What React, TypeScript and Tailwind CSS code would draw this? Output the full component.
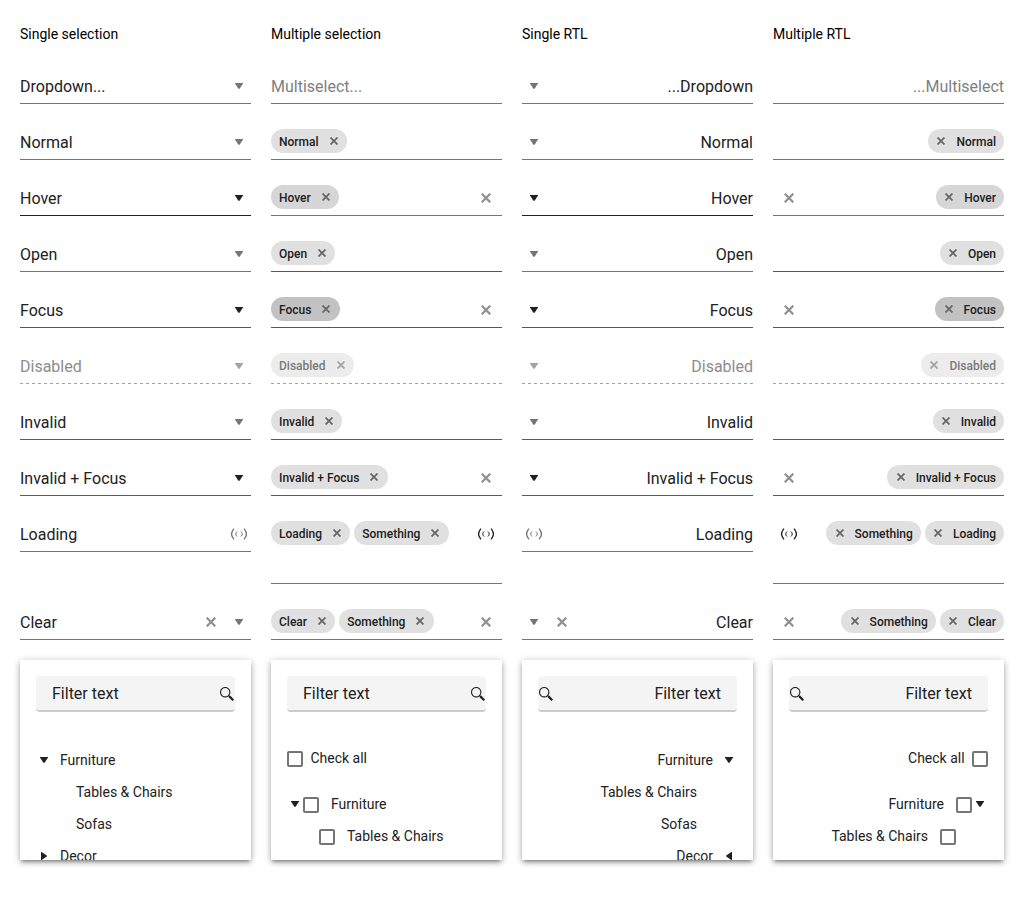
import React from "react";

type Line = "normal" | "strong" | "focus" | "invalid" | "disabled";

type FieldState = {
  label: string;
  line: Line;
  multiLine?: Line;
  activeArrow?: boolean;
  multiClear?: boolean;
  chipTone?: string;
  disabled?: boolean;
  loading?: boolean;
  clear?: boolean;
  extra?: string;
};

const lines: Record<Line, string> = {
  normal: "border-b border-[#757575]",
  strong: "border-b border-[#212121]",
  focus: "border-b border-[#3f51b5]",
  invalid: "border-b border-[#f41c0c]",
  disabled: "border-b border-transparent",
};

const states: FieldState[] = [
  { label: "Normal", line: "normal" },
  { label: "Hover", line: "strong", multiLine: "normal", activeArrow: true, multiClear: true, chipTone: "bg-[#d6d6d6]" },
  { label: "Open", line: "normal", multiLine: "focus" },
  { label: "Focus", line: "focus", activeArrow: true, multiClear: true, chipTone: "bg-[#c2c2c2]" },
  { label: "Disabled", line: "disabled", disabled: true },
  { label: "Invalid", line: "invalid" },
  { label: "Invalid + Focus", line: "invalid", activeArrow: true, multiClear: true },
  { label: "Loading", line: "normal", loading: true, extra: "Something" },
  { label: "Clear", line: "normal", clear: true, multiClear: true, extra: "Something" },
];

function Arrow({ className = "" }: { className?: string }) {
  return (
    <svg className={`h-1.5 w-2 shrink-0 ${className}`} viewBox="0 0 8 6" fill="currentColor">
      <path d="M0 0h8v.6L4.600 5.800H3.400L0 .6z" />
    </svg>
  );
}

function SideArrow() {
  return (
    <svg className="h-2 w-1.5 shrink-0 rtl:-scale-x-100" viewBox="0 0 6 8" fill="currentColor">
      <path d="M0 0v8h.6L5.800 4.600V3.400L.6 0z" />
    </svg>
  );
}

function Cross({ className }: { className: string }) {
  return (
    <svg className={`shrink-0 ${className}`} viewBox="0 0 10 10" fill="none" stroke="currentColor" strokeWidth="2.2">
      <path d="M.7.7l8.6 8.6M9.3.7L.7 9.3" />
    </svg>
  );
}

function Loader({ className }: { className: string }) {
  return (
    <svg className={`h-3 w-4 shrink-0 ${className}`} viewBox="0 0 16 12" fill="none" stroke="currentColor" strokeWidth="1.3">
      <path d="M3 .6C-.1 4 -.1 8 3 11.4M13 .6c3.1 3.4 3.1 7.400 0 10.800" />
      <path d="M6.100 3.500C4.300 5.100 4.300 6.900 6.100 8.500M9.900 3.500c1.800 1.600 1.800 3.400 0 5" strokeWidth="1" />
    </svg>
  );
}

function SearchIcon() {
  return (
    <svg className="h-3.5 w-3.5 shrink-0" viewBox="0 0 14 14" fill="none" stroke="#212121">
      <circle cx="5.200" cy="5.200" r="4.700" strokeWidth="1.100" />
      <path d="M8.500 8.500l1.500 1.500" strokeWidth="1.200" />
      <path d="M9.400 9.400l3.900 3.900" strokeWidth="2.200" />
    </svg>
  );
}

function DashedLine() {
  return (
    <svg className="absolute -bottom-px left-0 h-px w-full" preserveAspectRatio="none">
      <line x1="0" y1="0.5" x2="231" y2="0.5" stroke="#a3a3a3" strokeDasharray="3 3" />
    </svg>
  );
}

function Single({ state, placeholder }: { state?: FieldState; placeholder?: string }) {
  const line = state?.line ?? "normal";
  const dim = state?.disabled;
  return (
    <div className={`relative flex h-9 items-center pt-px ${lines[line]}`}>
      <span className={`flex-1 pt-0.5 text-base leading-6 ${dim ? "text-[#8c8c8c]" : "text-[#212121]"}`}>
        {state?.label ?? placeholder}
      </span>
      {state?.clear && (
        <span className="flex w-8 justify-center">
          <Cross className="h-2.5 w-2.5 text-[#8f8f8f]" />
        </span>
      )}
      <span className="flex w-6 justify-center">
        {state?.loading ? (
          <Loader className="text-[#757575]" />
        ) : (
          <Arrow className={state?.activeArrow ? "text-[#212121]" : dim ? "text-[#a3a3a3]" : "text-[#757575]"} />
        )}
      </span>
      {dim && <DashedLine />}
    </div>
  );
}

function Chip({ label, state }: { label: string; state: FieldState }) {
  return (
    <span
      className={`flex h-6 items-center rounded-full ps-2 pe-[9.2px] ${state.chipTone ?? "bg-[#e0e0e0]"} ${state.disabled ? "opacity-60" : ""}`}
    >
      <span className="pt-px text-xs leading-4 font-medium whitespace-nowrap text-[#212121]">{label}</span>
      <Cross className="ms-[11px] h-2 w-2 text-[#666666]" />
    </span>
  );
}

function Multi({ state }: { state: FieldState }) {
  return (
    <div
      className={`relative flex items-start pt-[5px] ${state.loading ? "h-[68px]" : "h-9"} ${lines[state.multiLine ?? state.line]}`}
    >
      <div className="flex flex-1 gap-1">
        <Chip label={state.label} state={state} />
        {state.extra && <Chip label={state.extra} state={state} />}
      </div>
      {(state.multiClear || state.loading) && (
        <span className="flex h-[26px] w-8 items-center justify-center">
          {state.loading ? <Loader className="text-[#212121]" /> : <Cross className="h-2.5 w-2.5 text-[#8f8f8f]" />}
        </span>
      )}
      {state.disabled && <DashedLine />}
    </div>
  );
}

function Box() {
  return <span className="h-4 w-4 shrink-0 rounded-[2px] border-2 border-[#757575]" />;
}

function Panel({ multi }: { multi?: boolean }) {
  return (
    <div className="h-[200px] overflow-hidden bg-white px-4 pt-4 text-sm text-[#212121] shadow-[0_3px_3px_-2px_rgba(0,0,0,0.3),0_3px_5px_rgba(0,0,0,0.2),0_1px_8px_rgba(0,0,0,0.2)]">
      <div className="flex h-9 items-center rounded border-b-2 border-[#cccccc] bg-[#f4f4f4] ps-4 pe-px pt-0.5">
        <span className="flex-1 text-base leading-6">Filter text</span>
        <SearchIcon />
      </div>
      {multi ? (
        <>
          <div className="mt-[30px] flex h-8 items-center gap-[7.4px]">
            <span className="flex pt-0.5">
              <Box />
            </span>
            <span>Check all</span>
          </div>
          <div className="mt-3.5 flex h-8 items-center">
            <span className="flex w-4 justify-center">
              <Arrow />
            </span>
            <span className="flex pt-0.5">
              <Box />
            </span>
            <span className="ms-3">Furniture</span>
          </div>
          <div className="flex h-8 items-center ps-8">
            <span className="flex pt-0.5">
              <Box />
            </span>
            <span className="ms-3">Tables &amp; Chairs</span>
          </div>
        </>
      ) : (
        <div className="mt-8">
          <div className="flex h-8 items-center">
            <span className="flex w-6 ps-1">
              <Arrow />
            </span>
            <span>Furniture</span>
          </div>
          <div className="flex h-8 items-center ps-10">Tables &amp; Chairs</div>
          <div className="flex h-8 items-center ps-10">Sofas</div>
          <div className="flex h-8 items-center">
            <span className="flex w-6 ps-[5px]">
              <SideArrow />
            </span>
            <span>Decor</span>
          </div>
        </div>
      )}
    </div>
  );
}

function Column({ title, multi, rtl }: { title: string; multi?: boolean; rtl?: boolean }) {
  return (
    <section className="flex flex-col">
      <h2 className="mb-5 h-7 text-sm leading-7 text-black">{title}</h2>
      <div dir={rtl ? "rtl" : "ltr"} className="flex flex-col gap-5">
        {multi ? (
          <div className={`flex h-9 items-center pt-[3px] text-base leading-6 text-[#808080] ${lines.normal}`}>
            Multiselect...
          </div>
        ) : (
          <Single placeholder="Dropdown..." />
        )}
        {states.map((state) => (
          <div key={state.label} className={state.loading ? "h-[68px]" : "h-9"}>
            {multi ? <Multi state={state} /> : <Single state={state} />}
          </div>
        ))}
        <Panel multi={multi} />
      </div>
    </section>
  );
}

export default function App() {
  return (
    <main className="grid h-[900px] w-[1024px] grid-cols-4 content-start gap-5 overflow-hidden bg-white p-5 font-['Roboto',sans-serif]">
      <Column title="Single selection" />
      <Column title="Multiple selection" multi />
      <Column title="Single RTL" rtl />
      <Column title="Multiple RTL" multi rtl />
    </main>
  );
}
